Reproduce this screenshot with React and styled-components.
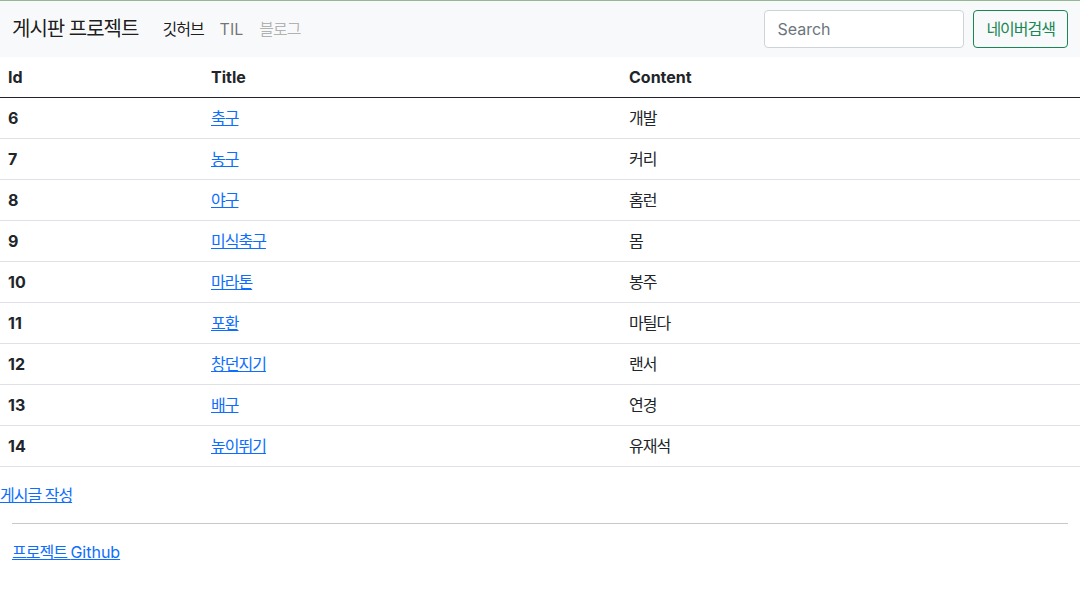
import styled, { createGlobalStyle } from "styled-components";

const GlobalStyle = createGlobalStyle`
    body {
        margin: 0;
        font-family: Inter, "Noto Sans CJK KR", sans-serif;
        font-size: 16px;
        line-height: 1.5;
        color: #212529;
        background: #fff;
    }
    a {
        color: #0d6efd;
        text-decoration: underline;
    }
`;

const boards = [
    { id: 6, title: "축구", content: "개발" },
    { id: 7, title: "농구", content: "커리" },
    { id: 8, title: "야구", content: "홈런" },
    { id: 9, title: "미식축구", content: "몸" },
    { id: 10, title: "마라톤", content: "봉주" },
    { id: 11, title: "포환", content: "마틸다" },
    { id: 12, title: "창던지기", content: "랜서" },
    { id: 13, title: "배구", content: "연경" },
    { id: 14, title: "높이뛰기", content: "유재석" },
];

const Navbar = () => (
    <Nav>
        <Brand href="#">게시판 프로젝트</Brand>
        <NavLinks>
            <NavLink href="#" $state="active"><Ko>깃허브</Ko></NavLink>
            <NavLink href="#">TIL</NavLink>
            <NavLink href="#" $state="disabled"><Ko>블로그</Ko></NavLink>
        </NavLinks>
        <SearchForm onSubmit={(e) => e.preventDefault()}>
            <SearchInput type="search" placeholder="Search" />
            <SearchButton type="submit">네이버검색</SearchButton>
        </SearchForm>
    </Nav>
);

const App = () => {
    return (
        <>
            <GlobalStyle />
            <Navbar />
            <Table>
                <thead>
                    <tr>
                        <HeadCell $width="187px">Id</HeadCell>
                        <HeadCell $width="402px">Title</HeadCell>
                        <HeadCell>Content</HeadCell>
                    </tr>
                </thead>
                <tbody>
                    {boards.map((b) => (
                        <Row key={b.id}>
                            <IdCell scope="row">{b.id}</IdCell>
                            <Cell><a href="#">{b.title}</a></Cell>
                            <Cell>{b.content}</Cell>
                        </Row>
                    ))}
                </tbody>
            </Table>
            <a href="#"><Ko>게시글 작성</Ko></a>
            <Footer>
                <Divider />
                <p><a href="#"><Ko>프로젝트 </Ko>Github</a></p>
            </Footer>
        </>
    );
};

export default App;

// Korean glyphs render a bit wider here than in the original, tighten them
const Ko = styled.span`
    letter-spacing: -1px;
`;

const Nav = styled.nav`
    display: flex;
    align-items: center;
    padding: 8px 12px;
    background: #f8f9fa;
    border-top: 1px solid #94b894;
`;

const Brand = styled.a`
    font-size: 20px;
    line-height: 30px;
    padding: 5px 0;
    margin-right: 16px;
    letter-spacing: -1px;
    color: rgba(0, 0, 0, 0.9);
    text-decoration: none;
    white-space: nowrap;
`;

const NavLinks = styled.div`
    display: flex;
    flex-grow: 1;
`;

const NavLink = styled.a`
    padding: 8px;
    text-decoration: none;
    color: ${(p) =>
        p.$state === "active"
            ? "rgba(0, 0, 0, 0.9)"
            : p.$state === "disabled"
            ? "rgba(0, 0, 0, 0.3)"
            : "rgba(0, 0, 0, 0.55)"};
`;

const SearchForm = styled.form`
    display: flex;
    margin: 0;
`;

const SearchInput = styled.input`
    width: 200px;
    height: 38px;
    box-sizing: border-box;
    margin-right: 9px;
    padding: 6px 12px;
    font: inherit;
    color: #212529;
    border: 1px solid #ced4da;
    border-radius: 4px;
    background: #fff;
    outline: none;
    &::placeholder {
        color: #6c757d;
    }
`;

const SearchButton = styled.button`
    height: 38px;
    padding: 6px 12px;
    font: inherit;
    letter-spacing: -1px;
    color: #198754;
    background: transparent;
    border: 1px solid #198754;
    border-radius: 4px;
    white-space: nowrap;
    cursor: pointer;
`;

const Table = styled.table`
    width: 100%;
    margin-bottom: 16px;
    border-collapse: collapse;
    color: #212529;

    thead tr {
        border-bottom: 1px solid #212529;
    }
`;

const HeadCell = styled.th`
    width: ${(p) => p.$width || "auto"};
    padding: 8px;
    text-align: left;
    font-weight: 700;
`;

const Row = styled.tr`
    border-bottom: 1px solid #dee2e6;
`;

const IdCell = styled.th`
    padding: 8px;
    text-align: left;
    font-weight: 700;
`;

const Cell = styled.td`
    padding: 8px;
    letter-spacing: -1px;
`;

const Footer = styled.footer`
    padding: 0 12px;

    p {
        margin: 0 0 16px;
    }
`;

const Divider = styled.hr`
    margin: 16px 0;
    border: 0;
    border-top: 1px solid #c8c8c8;
`;
